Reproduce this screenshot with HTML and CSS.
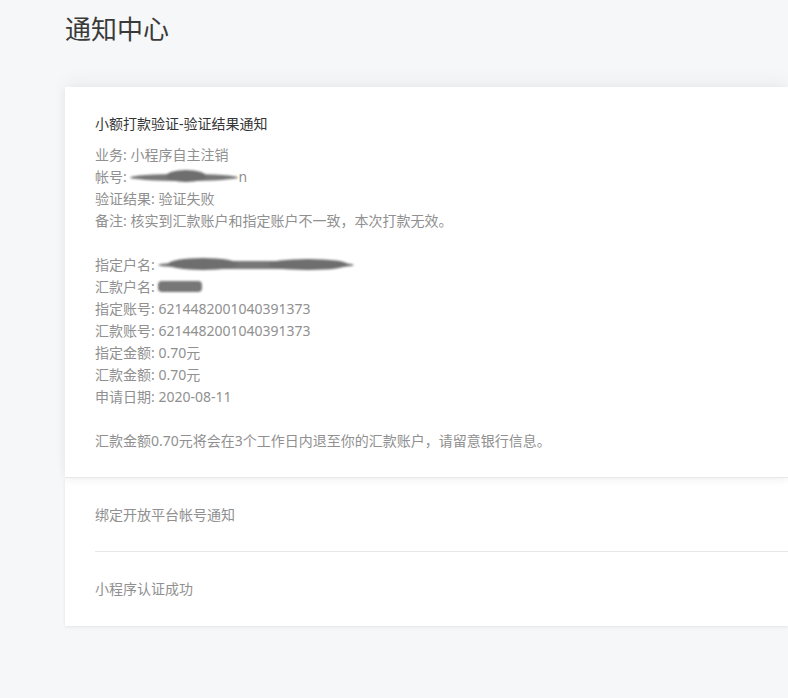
FILE: index.html
```html
<!DOCTYPE html>
<html lang="zh-CN">
<head>
    <meta charset="UTF-8">
    <meta name="viewport" content="width=device-width, initial-scale=1.0">
    <title>通知中心</title>
    <link rel="stylesheet" href="styles.css">
</head>
<body>
    <div class="page">
        <h1 class="page-title">通知中心</h1>

        <div class="notice open">
            <h3 class="notice-title">小额打款验证-验证结果通知</h3>
            <div class="notice-body">
                <p>业务: 小程序自主注销</p>
                <p>帐号: <span class="mask mask-account"><i></i></span>n</p>
                <p>验证结果: 验证失败</p>
                <p>备注: 核实到汇款账户和指定账户不一致，本次打款无效。</p>
                <p class="blank"></p>
                <p>指定户名: <span class="mask mask-name"><i></i><i></i></span></p>
                <p>汇款户名: <span class="mask mask-short"></span></p>
                <p>指定账号: 6214482001040391373</p>
                <p>汇款账号: 6214482001040391373</p>
                <p>指定金额: 0.70元</p>
                <p>汇款金额: 0.70元</p>
                <p>申请日期: 2020-08-11</p>
                <p class="blank"></p>
                <p>汇款金额0.70元将会在3个工作日内退至你的汇款账户，请留意银行信息。</p>
            </div>
        </div>

        <div class="notice-list">
            <div class="notice-item">绑定开放平台帐号通知</div>
            <div class="notice-item">小程序认证成功</div>
        </div>
    </div>
</body>
</html>
```

FILE: styles.css
```css
html, body {
    margin: 0;
    padding: 0;
}
body {
    font-family: "Noto Sans", "Noto Sans CJK SC", sans-serif;
    background-color: #f6f7f9;
    color: #909090;
    overflow: hidden;
    height: 698px;
}
.page {
    padding: 0 0 0 65px;
}
.page-title {
    margin: 0;
    padding-top: 10px;
    height: 87px;
    box-sizing: border-box;
    font-size: 26px;
    font-weight: normal;
    line-height: 38px;
    color: #3a3a3a;
}
.notice {
    background-color: #fff;
}
.notice.open {
    padding: 26px 30px 25px;
    box-shadow: 0 -8px 16px rgba(0, 0, 0, 0.035), 0 2px 8px rgba(0, 0, 0, 0.06);
    position: relative;
    border-bottom: 1px solid #e7e7e9;
}
.notice-title {
    margin: 0 0 9px;
    font-size: 14px;
    font-weight: normal;
    line-height: 22px;
    color: #353535;
}
.notice-body p {
    margin: 0;
    font-size: 14px;
    line-height: 22px;
    height: 22px;
    white-space: nowrap;
}
.mask {
    display: inline-block;
    position: relative;
    vertical-align: middle;
    background-color: #777;
    border-radius: 50%;
    filter: blur(1px);
}
.mask i {
    position: absolute;
    display: block;
    background-color: #6e6e6e;
    border-radius: 50%;
}
.mask-account {
    width: 108px;
    height: 7px;
    margin-top: -2px;
}
.mask-account i {
    left: 36px;
    top: -4px;
    width: 40px;
    height: 12px;
}
.mask-name {
    width: 196px;
    height: 8px;
    margin-top: -3px;
}
.mask-name i:first-child {
    left: 10px;
    top: -3px;
    width: 70px;
    height: 12px;
}
.mask-name i:last-child {
    left: 110px;
    top: -2px;
    width: 80px;
    height: 11px;
}
.mask-short {
    width: 44px;
    height: 11px;
    margin-top: -3px;
    border-radius: 4px;
}
.notice-list {
    background-color: #fff;
    padding-left: 30px;
    box-shadow: 0 1px 3px rgba(0, 0, 0, 0.08);
}
.notice-item {
    height: 74px;
    line-height: 74px;
    font-size: 14px;
    color: #909090;
    border-bottom: 1px solid #e7e7e9;
    box-sizing: border-box;
}
.notice-item:last-child {
    border-bottom: none;
}
```
